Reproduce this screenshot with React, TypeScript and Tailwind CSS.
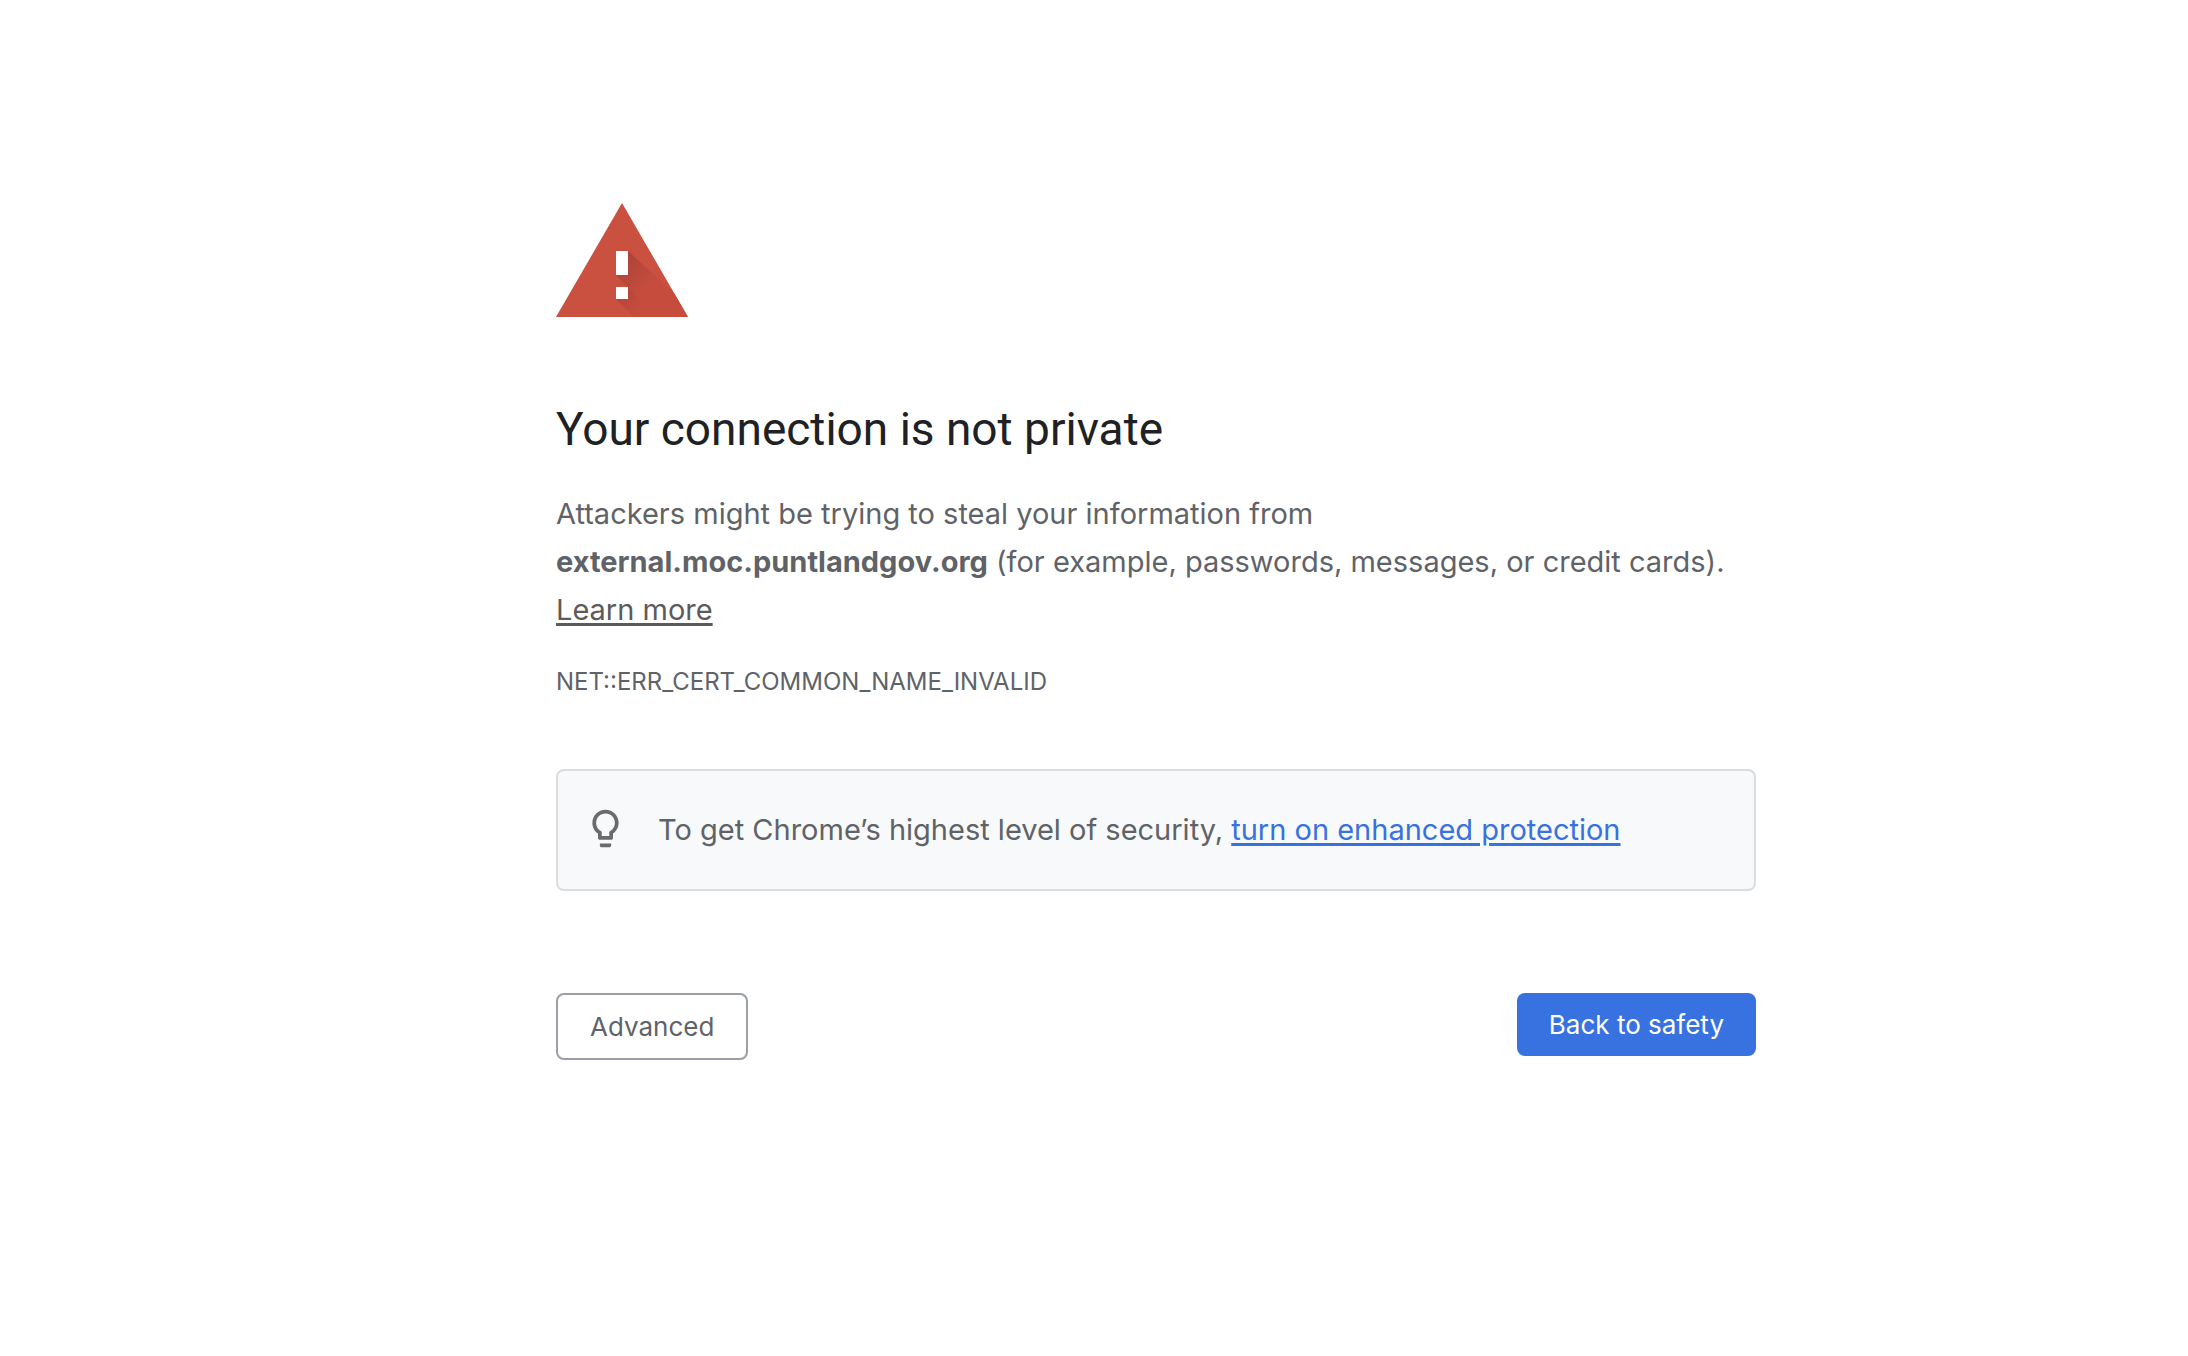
const LINK = "underline underline-offset-3 decoration-3";
const BUTTON = "cursor-pointer rounded-lg px-8 py-4";

function WarningIcon() {
  return (
    <svg viewBox="0 0 132 114" className="h-[114px] w-[132px]" aria-hidden="true">
      <defs>
        <linearGradient id="bar" x1="63" y1="63" x2="88" y2="88" gradientUnits="userSpaceOnUse">
          <stop offset="0" stopColor="#ae4438" />
          <stop offset="1" stopColor="#c64d3e" />
        </linearGradient>
        <linearGradient id="dot" x1="76" y1="76" x2="95" y2="95" gradientUnits="userSpaceOnUse">
          <stop offset="0" stopColor="#b24539" />
          <stop offset="1" stopColor="#c64d3e" />
        </linearGradient>
      </defs>
      <path d="M0 114 66 0l66 114z" fill="#ca5040" />
      {/* long shadows cast by the exclamation mark */}
      <path d="M72 48l46 42 14 24h-30L60 72h12z" fill="url(#bar)" />
      <path d="M72 84l30 30H78L60 96z" fill="url(#dot)" />
      <path d="M60 48h12v24H60zM60 84h12v12H60z" fill="#fff" />
    </svg>
  );
}

function BulbIcon() {
  return (
    <svg viewBox="0 0 24 24" className="size-[45px] shrink-0 fill-[#6b6b6b]" aria-hidden="true">
      <path d="M9 21c0 .5.4 1 1 1h4c.6 0 1-.5 1-1v-1H9v1zm3-19C8.100 2 5 5.100 5 9c0 2.400 1.200 4.500 3 5.700V17c0 .5.4 1 1 1h6c.6 0 1-.5 1-1v-2.300c1.800-1.300 3-3.400 3-5.700 0-3.900-3.100-7-7-7zm2.900 11.100-.9.600V16h-4v-2.300l-.9-.6C7.800 12.200 7 10.600 7 9c0-2.800 2.200-5 5-5s5 2.200 5 5c0 1.600-.8 3.200-2.100 4.100z" />
    </svg>
  );
}

export default function App() {
  return (
    <div className="pt-[203px] pl-31 font-['Inter',sans-serif] text-[29px] leading-12 text-[#5f6368]">
      <main className="mx-auto max-w-[1200px]">
        <WarningIcon />
        <h1 className="mt-[83px] font-['Roboto',sans-serif] text-[46px] leading-[58px] text-[#202124]">
          Your connection is not private
        </h1>
        <p className="mt-8">
          Attackers might be trying to steal your information from
          <br />
          <strong>external.moc.puntlandgov.org</strong> (for example, passwords, messages, or
          credit cards).{" "}
          <a href="#learn-more" className={`${LINK} text-[#5b5b5b]`}>
            Learn more
          </a>
        </p>
        <p className="mt-6 text-2xl leading-12">NET::ERR_CERT_COMMON_NAME_INVALID</p>
        <div className="mt-[63px] flex items-start gap-[30px] rounded-lg border-2 border-[#dadce0] bg-[#f8f9fa] px-[25px] py-[35px]">
          <BulbIcon />
          <p>
            To get Chrome’s highest level of security,{" "}
            <a href="#enhanced-protection" className={`${LINK} text-[#3871e0]`}>
              turn on enhanced protection
            </a>
          </p>
        </div>
        <div className="mt-[102px] flex items-start justify-between text-[26px] leading-[31px]">
          <button type="button" className={`${BUTTON} border-2 border-[#9aa0a6] bg-white`}>
            Advanced
          </button>
          <button type="button" className={`${BUTTON} bg-[#3871e0] text-white`}>
            Back to safety
          </button>
        </div>
      </main>
    </div>
  );
}
